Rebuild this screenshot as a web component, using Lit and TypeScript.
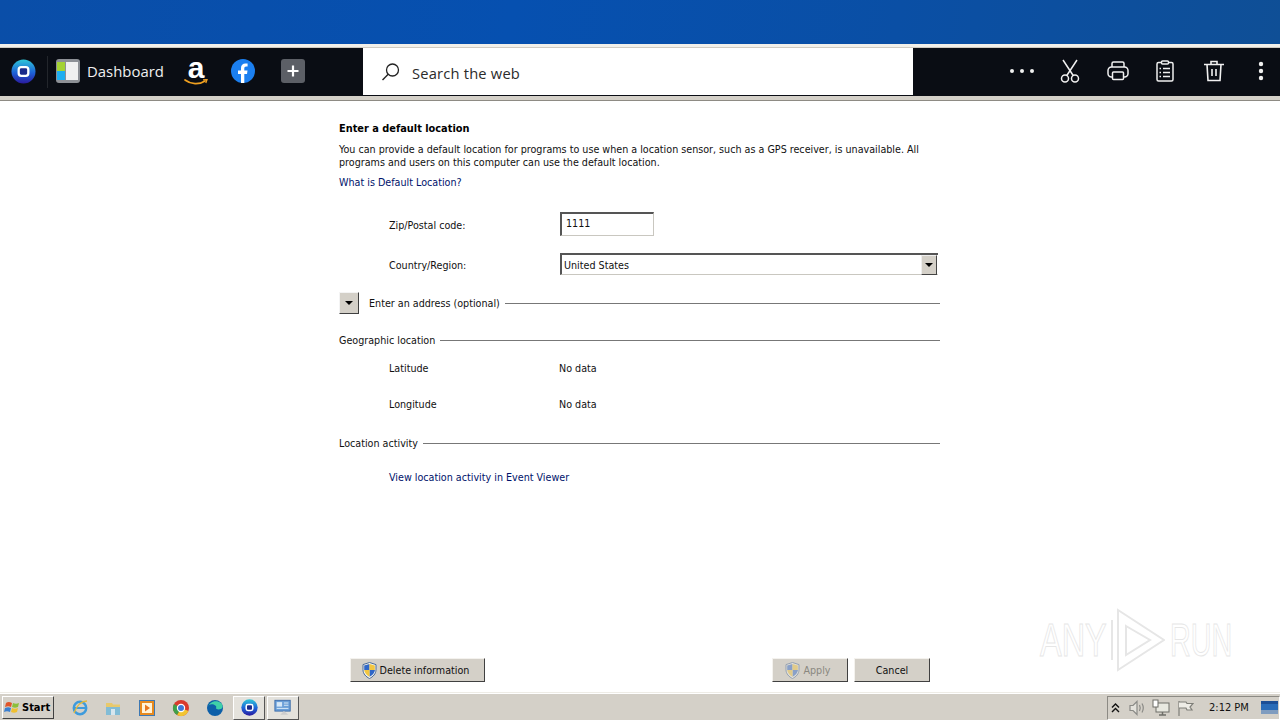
import { LitElement, html, css } from "lit";
import { customElement } from "lit/decorators.js";

const orb = (s: number) => html`<svg width=${s} height=${s} viewBox="0 0 26 26">
  <defs><linearGradient id="og" x1="0" y1="0" x2="0" y2="1"><stop offset="0" stop-color="#2fc6d8"/><stop offset=".55" stop-color="#1d62d8"/><stop offset="1" stop-color="#2a1a9e"/></linearGradient></defs>
  <circle cx="13" cy="13" r="12.5" fill="url(#og)"/><rect x="8" y="8.5" width="10" height="9" rx="2.6" fill="#1a2a8a" stroke="#fff" stroke-width="2.4"/></svg>`;

const shield = (dim: boolean) => html`<svg width="15" height="17" viewBox="0 0 15 17" class=${dim ? "dim" : ""}>
  <path d="M7.5.5 14 2.6v5.2c0 4-3 7-6.5 8.7C4 14.8 1 11.8 1 7.8V2.6z" fill="#f4f4ee" stroke="#4a6a98"/>
  <path d="M7.5 2v6H2.2V3.4z" fill="#2f67c8"/><path d="M7.5 8H13c-.3 3-2.6 5.2-5.5 6.8z" fill="#2f67c8"/>
  <path d="M7.5 2 12.8 3.4V8H7.5z" fill="#f2c641"/><path d="M7.5 8v6.8C4.8 13.2 2.5 11 2.2 8z" fill="#f2c641"/></svg>`;

@customElement("app-root")
export class AppRoot extends LitElement {
  static styles = css`
    :host { display: block; width: 1280px; height: 720px; overflow: hidden; position: relative; background: #fff;
      font-family: "DejaVu Sans Condensed", "DejaVu Sans", Verdana, sans-serif; font-stretch: condensed; color: #111; }
    .page { display: flex; flex-direction: column; height: 720px; }
    .sky { height: 44px; flex: none; background: linear-gradient(100deg, #0a4ea8 0%, #0650b0 40%, #0a4fa5 70%, #0f4f96 100%); }
    .rule { height: 4px; flex: none; background: #f2f0ea; border-bottom: 1px solid #cfcbc2; box-sizing: border-box; }
    .bar { height: 48px; flex: none; background: #0a0d14; display: flex; align-items: center; color: #fff; }
    .slot { display: flex; align-items: center; justify-content: center; flex: none; }
    .orb { width: 48px; height: 48px; box-sizing: border-box; position: relative; padding: 0 2px 2px 0; }
    .orb::after { content: ""; position: absolute; right: 0; top: 8px; bottom: 8px; width: 1px; background: #23262c; }
    .dash { margin-left: 8px; width: 24px; height: 24px; border-radius: 3px; background: #8d9096; display: grid; grid-template-columns: 8px 1fr; padding: 3px 2px 3px 1px; box-sizing: border-box; gap: 1px; margin-top: -2px; }
    .dash i { display: block; }
    .dash .l { display: flex; flex-direction: column; }
    .dash .l b { flex: 1; display: block; }
    .dash .w { background: #f0f0f0; }
    .dash-t { margin-left: 7px; font: 400 14.9px "Open Sans", sans-serif; color: #f0f0f0; width: 77px; white-space: nowrap; margin-top: -3px; }
    .amz { width: 32px; margin-left: 16px; height: 32px; flex-direction: column; margin-top: -2px; }
    .amz span { font: 700 30px/22px "Liberation Sans", sans-serif; color: #fff; display: block; height: 22px; }
    .fb { margin-left: 19px; margin-top: -2px; }
    .plus { margin-left: 26px; width: 24px; height: 24px; border-radius: 3px; background: #5c5f66; margin-top: -2px; }
    .search { margin-left: 58px; width: 550px; height: 47px; align-self: flex-start; background: #fff; display: flex; align-items: center; color: #333; }
    .search svg { margin-left: 18px; flex: none; }
    .search span { margin-left: 11px; font: 400 14.7px "Open Sans", sans-serif; letter-spacing: .2px; margin-top: 3px; color: #2b2b2b; }
    .tools { margin-left: auto; display: flex; align-items: center; margin-top: -2px; }
    .tools .slot { height: 48px; }
    .tools .kebab { width: 41px; padding-left: 2px; box-sizing: border-box; }
    .strip { height: 5px; flex: none; background: #d4d0c8; border-bottom: 1px solid #8e8b84; box-sizing: border-box; }
    .main { flex: 1; min-height: 0; padding: 21px 0 10px 339px; display: flex; flex-direction: column; font-size: 10.66px; line-height: 13px; }
    .col { width: 601px; flex: 1; display: flex; flex-direction: column; }
    h1 { font-size: 10.9px; line-height: 14px; font-weight: 700; margin: 0; height: 14px; color: #000; }
    p { margin: 7px 0 0; white-space: nowrap; }
    a { color: #00136b; text-decoration: none; }
    .link { margin-top: 7px; height: 14px; line-height: 14px; }
    .row { display: flex; align-items: center; padding-left: 50px; }
    .lab { width: 171px; flex: none; }
    .zip .lab, .country .lab { padding-top: 2px; }
    .wide { width: 170px; }
    .zip { margin-top: 22px; height: 24px; }
    .inp { width: 94px; height: 24px; box-sizing: border-box; border: 1px solid #c9c7c0; border-top: 2px solid #555; border-left: 2px solid #555; padding: 2px 0 0 4px; line-height: 16px; background: #fff; }
    .country { margin-top: 17px; height: 22px; }
    .sel { width: 378px; height: 22px; box-sizing: border-box; border-top: 2px solid #555; border-left: 2px solid #555; border-bottom: 1px solid #c9c7c0; display: flex; align-items: center; justify-content: space-between; padding-left: 2px; line-height: 15px; }
    .sel .txt { padding-top: 2px; }
    .sel .arr { width: 16px; height: 20px; box-sizing: border-box; background: #d4d0c8; border: 1px solid; border-color: #eee #444 #444 #eee; display: flex; align-items: center; justify-content: center; margin-bottom: -1px; margin-right: 1px; }
    .tri { width: 0; height: 0; border-left: 4px solid transparent; border-right: 4px solid transparent; border-top: 4px solid #000; }
    .sec { display: flex; align-items: center; gap: 5px; }
    .sec::after { content: ""; flex: 1; height: 1px; background: #777; }
    .addr { margin-top: 17px; height: 22px; }
    .tog { width: 20px; height: 22px; box-sizing: border-box; background: #d4d0c8; border: 1px solid; border-color: #f4f4f4 #404040 #404040 #f4f4f4; display: flex; align-items: center; justify-content: center; margin-right: 5px; }
    .geo { margin-top: 20px; height: 13px; }
    .lat { margin-top: 15px; height: 13px; }
    .lon { margin-top: 23px; height: 13px; }
    .act { margin-top: 26px; height: 13px; }
    .view { margin-top: 21px; height: 13px; }
    .btns { margin-top: auto; display: flex; padding-left: 11px; padding-right: 10px; }
    .btn { height: 24px; box-sizing: border-box; background: #d4d0c8; border: 1px solid; border-color: #f4f2ee #404040 #404040 #f4f2ee; display: flex; align-items: center; justify-content: center; gap: 3px; color: #111; }
    .del { width: 135px; padding-right: 4px; }
    .apply { width: 76px; margin-left: auto; color: #8a8880; padding-right: 4px; }
    .cancel { width: 76px; margin-left: 6px; }
    .dim { opacity: .45; }
    .task { height: 28px; flex: none; background: #d4d0c8; border-top: 1px solid #eeece6; box-shadow: inset 0 1px 0 #fff; box-sizing: border-box; display: flex; align-items: center; padding: 2px 0 0 2px; font-size: 11px; }
    .start { width: 52px; height: 23px; box-sizing: border-box; border: 1px solid; border-color: #fff #404040 #404040 #fff; display: flex; align-items: center; gap: 1px; padding-left: 1px; font-weight: 700; font-size: 11px; color: #000; }
    .ql { margin-left: 9px; display: flex; align-items: center; }
    .ql .slot { width: 34px; height: 24px; }
    .ql .slot.nar { width: 33px; }
    .ql .on { box-sizing: border-box; width: 32px; margin-right: 2px; border: 1px solid; border-color: #fff #555 #555 #fff; background: #e4e2dc; }
    .ql .first { margin-left: 1px; }
    .tray { margin-left: auto; height: 24px; width: 173px; box-sizing: border-box; border: 1px solid; border-color: #8c8a84 #fff #fff #8c8a84; display: flex; align-items: center; padding-right: 1px; }
    .tray .clock { font-size: 11px; color: #111; margin-left: 12px; width: 52px; white-space: nowrap; }
    .tray .chev { width: 14px; }
    .tray .ti { width: 24px; }
    .tray .blue { width: 17px; }
    .tray .show { margin-left: 3px; }
    .wm { position: absolute; left: 1040px; top: 608px; display: flex; align-items: center; height: 64px; pointer-events: none; font: 400 47px/64px "Liberation Sans", sans-serif; font-stretch: normal; color: #fff; -webkit-text-stroke: 1px #e6e6e6; }
    .wm span { display: block; transform-origin: left center; white-space: nowrap; }
    .any { width: 70px; transform: scaleX(.69); }
    .run { width: 62px; margin-left: 5px; transform: scaleX(.61); }
  `;

  private tool(w: number, body: unknown) {
    return html`<div class="slot" style="width:${w}px">${body}</div>`;
  }

  render() {
    return html`<div class="page">
      <div class="sky"></div>
      <div class="rule"></div>
      <div class="bar">
        <div class="slot orb">${orb(25)}</div>
        <div class="dash"><div class="l"><b style="background:#a4d233"></b><b style="background:#1eaef0"></b></div><i class="w"></i></div>
        <div class="dash-t">Dashboard</div>
        <div class="slot amz"><span>a</span>
          <svg width="24" height="7" viewBox="0 0 24 7"><path d="M1 1c6 4.500 14 5 20 1" fill="none" stroke="#f0a020" stroke-width="1.700" stroke-linecap="round"/><path d="M19 .8 23 .6 21.800 4" fill="none" stroke="#f0a020" stroke-width="1.300"/></svg></div>
        <div class="slot fb"><svg width="24" height="24" viewBox="0 0 24 24"><circle cx="12" cy="12" r="12" fill="#1b7ff0"/><path d="M10 24v-9H7v-3.500h3V9c0-3 1.800-4.600 4.400-4.600 1.200 0 2.200.2 2.200.2v3h-1.400c-1.400 0-1.900.9-1.900 1.800v2.100h3.200l-.5 3.500h-2.700v9z" fill="#fff"/></svg></div>
        <div class="slot plus"><svg width="14" height="14" viewBox="0 0 14 14"><path d="M7 1.500v11M1.500 7h11" stroke="#fff" stroke-width="2.200"/></svg></div>
        <div class="search">
          <svg width="20" height="20" viewBox="0 0 20 20"><circle cx="11.500" cy="8" r="6" fill="none" stroke="#222" stroke-width="1.300"/><path d="M7.200 12.300 1.500 18" stroke="#222" stroke-width="1.400"/></svg>
          <span>Search the web</span>
        </div>
        <div class="tools">
          ${this.tool(48, html`<svg width="26" height="6" viewBox="0 0 26 6"><g fill="#f0f0f0"><circle cx="3" cy="3" r="2"/><circle cx="13" cy="3" r="2"/><circle cx="23" cy="3" r="2"/></g></svg>`)}
          ${this.tool(48, html`<svg width="20" height="24" viewBox="0 0 20 24" fill="none" stroke="#f0f0f0" stroke-width="1.500"><circle cx="5" cy="19.500" r="3.500"/><circle cx="15" cy="19.500" r="3.500"/><path d="M6.800 16.500 17 1M13.200 16.500 3 1"/></svg>`)}
          ${this.tool(48, html`<svg width="22" height="20" viewBox="0 0 22 20" fill="none" stroke="#f0f0f0" stroke-width="1.500"><path d="M5 6V2.500C5 1.700 5.700 1 6.500 1h9c.8 0 1.500.7 1.500 1.500V6"/><rect x="1" y="6" width="20" height="10" rx="3.500"/><rect x="5.500" y="11" width="11" height="7.500" rx="1" fill="#0a0d14"/></svg>`)}
          ${this.tool(46, html`<svg width="18" height="22" viewBox="0 0 18 22" fill="none" stroke="#f0f0f0" stroke-width="1.500"><rect x="1" y="2.500" width="16" height="18.500" rx="1.500"/><rect x="5.500" y="1" width="7" height="3" rx="1" fill="#0a0d14"/><path d="M7 8.500h7M7 12.500h7M7 16.500h7M3.500 8.500h1.500M3.500 12.500h1.500M3.500 16.500h1.500"/></svg>`)}
          ${this.tool(51, html`<svg width="20" height="22" viewBox="0 0 20 22" fill="none" stroke="#f0f0f0" stroke-width="1.600"><path d="M0 4.500h20M7 4.500V1.500h6v3M3 4.500l1 16h12l1-16M8 9v7M12 9v7"/></svg>`)}
          <div class="slot kebab"><svg width="6" height="20" viewBox="0 0 6 20"><g fill="#f0f0f0"><circle cx="3" cy="3" r="2.200"/><circle cx="3" cy="10" r="2.200"/><circle cx="3" cy="17" r="2.200"/></g></svg></div>
        </div>
      </div>
      <div class="strip"></div>
      <div class="main"><div class="col">
        <h1>Enter a default location</h1>
        <p>You can provide a default location for programs to use when a location sensor, such as a GPS receiver, is unavailable. All<br>programs and users on this computer can use the default location.</p>
        <div class="link"><a>What is Default Location?</a></div>
        <div class="row zip"><div class="lab">Zip/Postal code:</div><div class="inp">1111</div></div>
        <div class="row country"><div class="lab">Country/Region:</div><div class="sel"><span class="txt">United States</span><span class="arr"><span class="tri"></span></span></div></div>
        <div class="sec addr"><span class="tog"><span class="tri"></span></span><span>Enter an address (optional)</span></div>
        <div class="sec geo"><span>Geographic location</span></div>
        <div class="row lat"><div class="lab wide">Latitude</div><div>No data</div></div>
        <div class="row lon"><div class="lab wide">Longitude</div><div>No data</div></div>
        <div class="sec act"><span>Location activity</span></div>
        <div class="row view"><a>View location activity in Event Viewer</a></div>
        <div class="btns">
          <div class="btn del">${shield(false)}<span>Delete information</span></div>
          <div class="btn apply">${shield(true)}<span>Apply</span></div>
          <div class="btn cancel">Cancel</div>
        </div>
      </div></div>
      <div class="task">
        <div class="start"><svg width="17" height="16" viewBox="0 0 17 16"><path d="M2 3c2-1.500 4-1 6 0L7 7C5 6 3.500 6 1 7z" fill="#e0552a"/><path d="M9 3c2 1 4 1 6 0l-1 4c-2 1-4 1-6 0z" fill="#8cbf3a"/><path d="M1 8c2.500-1 4-1 6 0l-1 4c-2-1-4-1-6 0z" fill="#3a7fd0"/><path d="M8 8c2 1 4 1 6 0l-1 4c-2 1-4 1-6 0z" fill="#f0c030"/></svg><span>Start</span></div>
        <div class="ql">
          <div class="slot"><svg width="18" height="18" viewBox="0 0 18 18"><circle cx="9" cy="9" r="6.200" fill="none" stroke="#3e9bdc" stroke-width="2.500"/><path d="M4 9h10" stroke="#3e9bdc" stroke-width="2"/><path d="M3 14c3-8 8-12 13-12" fill="none" stroke="#e2b93c" stroke-width="1.300"/></svg></div>
          <div class="slot nar"><svg width="17" height="16" viewBox="0 0 17 16"><path d="M1 3h6l1 1.500h7V7H1z" fill="#e8c96c"/><rect x="1" y="7" width="14" height="8" fill="#82bcd6"/><rect x="6" y="9" width="4" height="6" fill="#d7e6ee"/></svg></div>
          <div class="slot"><svg width="16" height="16" viewBox="0 0 16 16"><rect x=".5" y=".5" width="15" height="15" fill="#e88a1e" stroke="#3c78b4"/><rect x="3" y="3" width="10" height="10" fill="#fff3d8"/><path d="M6 4.500v7l5-3.500z" fill="#e8771e"/></svg></div>
          <div class="slot"><svg width="18" height="18" viewBox="0 0 18 18"><circle cx="9" cy="9" r="8" fill="#d93a2e"/><path d="M9 9 16.500 12A8 8 0 0 1 5 16z" fill="#f2c531"/><path d="M9 9 5 16A8 8 0 0 1 2 5z" fill="#3fa04a"/><circle cx="9" cy="9" r="3.600" fill="#3e78d8" stroke="#fff" stroke-width="1.200"/></svg></div>
          <div class="slot"><svg width="18" height="18" viewBox="0 0 18 18"><circle cx="9" cy="9" r="8" fill="#0d5fa8"/><path d="M2 8c1-5 8-8 13-4 2 2 2 5 0 6-3 1-5 0-5-1 2-3-7-6-8-1z" fill="#3fd0a8"/></svg></div>
          <div class="slot on first">${orb(17)}</div>
          <div class="slot on"><svg width="18" height="17" viewBox="0 0 20 18"><rect x="1" y="1" width="17" height="12" fill="#6a9fd8" stroke="#3a6aa8"/><rect x="3" y="3" width="6" height="5" fill="#d6e8f8"/><path d="M11 4h5M11 6.500h5M3 10h13" stroke="#e4f0fa"/><path d="M7 17l4-4 5 4z" fill="#ccc"/></svg></div>
        </div>
        <div class="tray">
          <div class="slot chev"><svg width="9" height="10" viewBox="0 0 9 10" fill="none" stroke="#111" stroke-width="1.400"><path d="M1 4.500 4.500 1 8 4.500M1 9l3.500-3.500L8 9"/></svg></div>
          <div class="slot ti show"><svg width="17" height="16" viewBox="0 0 17 16" fill="none" stroke="#8a8a86" stroke-width="1.200"><path d="M1 5.500h3l4-4v13l-4-4H1z" fill="#e4e2dc"/><path d="M10.500 5c1 2 1 4 0 6M13 3.500c1.700 3 1.700 6 0 9"/></svg></div>
          <div class="slot ti"><svg width="18" height="17" viewBox="0 0 18 17"><rect x="4" y="4" width="13" height="9" fill="#e8e8e0" stroke="#6e6e68"/><path d="M7 16h7M10.500 13v3" stroke="#6e6e68" stroke-width="1.500"/><rect x="1" y="1" width="5" height="7" fill="#fff" stroke="#6e6e68"/></svg></div>
          <div class="slot ti"><svg width="17" height="16" viewBox="0 0 17 16" fill="none" stroke="#7e7e78" stroke-width="1.200"><path d="M2 1v15"/><path d="M2 2h7l1 1.500h6l-3 3.500 2 3H10L9 8H2" fill="#eeece6"/></svg></div>
          <div class="clock">2:12 PM</div>
          <div class="slot blue"><svg width="17" height="13" viewBox="0 0 17 13"><rect width="17" height="13" fill="#2a6cb8"/><rect y="9" width="17" height="4" fill="#7f9cbf"/><rect width="17" height="3" fill="#1c4f96"/></svg></div>
        </div>
      </div>
      <div class="wm"><span class="any">ANY</span><svg width="55" height="64" viewBox="0 0 55 64" fill="none" stroke="#e6e6e6" stroke-width="2"><path d="M8 2 54 32 8 62zM16 18 40 32 16 47zM2 12v40"/></svg><span class="run">RUN</span></div>
    </div>`;
  }
}
